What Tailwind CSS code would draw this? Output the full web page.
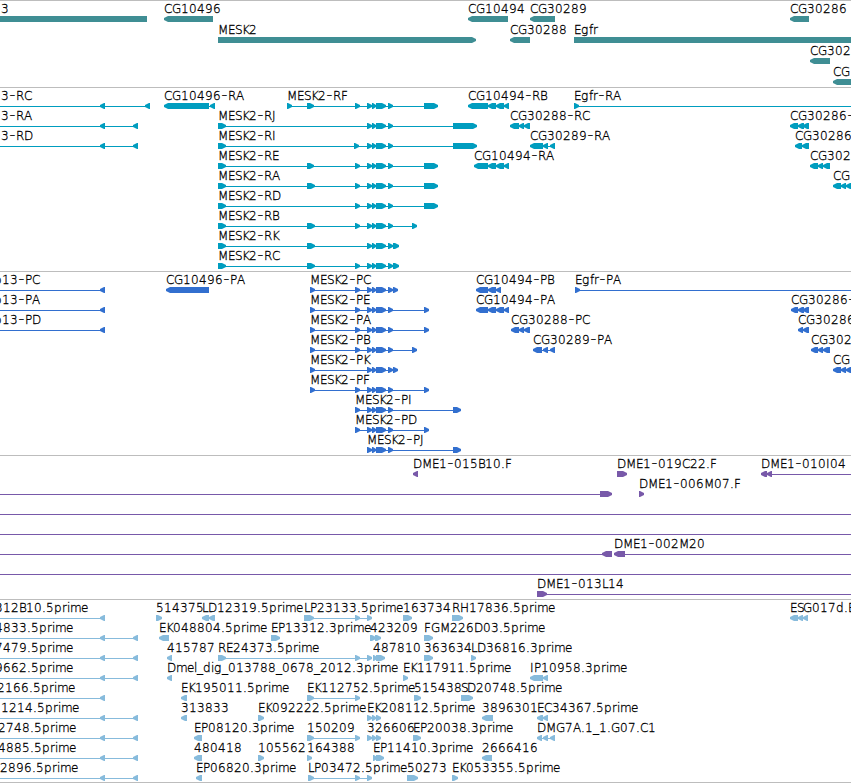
<!DOCTYPE html>
<html lang="en">
<head>
<meta charset="utf-8">
<title>Genome tracks</title>
<script src="https://cdn.jsdelivr.net/npm/@tailwindcss/browser@4"></script>
</head>
<body class="bg-white overflow-hidden">
<main class="flex flex-col w-[851px] h-[783px] border-b border-[#bdbdbd] font-['DejaVu_Sans',sans-serif] font-extralight text-[12px] text-black">
  <section class="h-[87px] border-t border-[#bdbdbd] text-[#3f8e94]"><svg id="genes" class="block w-full h-full overflow-hidden"></svg></section>
  <section class="h-[184px] border-t border-[#bdbdbd] text-[#009dbf]"><svg id="transcripts" class="block w-full h-full overflow-hidden"></svg></section>
  <section class="h-[184px] border-t border-[#bdbdbd] text-[#326fcf]"><svg id="proteins" class="block w-full h-full overflow-hidden"></svg></section>
  <section class="h-[144px] border-t border-[#bdbdbd] text-[#7859a9]"><svg id="clones" class="block w-full h-full overflow-hidden"></svg></section>
  <section class="h-[183px] border-t border-[#bdbdbd] text-[#87bbdc]"><svg id="ests" class="block w-full h-full overflow-hidden"></svg></section>
</main>
<script>
const NS = 'http://www.w3.org/2000/svg';
// Horizontal advance of each label character, in pixels
const ADV = {C:8,G:9,M:10,E:7,S:6,K:7,'-':7,R:8,A:8,B:7,D:9,F:7,J:4,I:4,P:7,L:6,H:9,'.':4,p:8,r:5,i:3,m:11,e:7,_:6,l:3,g:8,f:4,d:8};

function add(svg, tag, attrs) {
  const el = document.createElementNS(NS, tag);
  for (const k in attrs) el.setAttribute(k, attrs[k]);
  svg.appendChild(el);
  return el;
}

// Each feature: [row, strand, label, labelX, exons, lineStart, lineEnd]
function draw(id, pitch, features) {
  const svg = document.getElementById(id);
  for (const [row, strand, label, lx, exons, a, b] of features) {
    const top = row * pitch;
    const s = a ?? (exons.length ? exons[0][0] : 0);
    const e = b ?? (exons.length ? exons[exons.length - 1][1] : 851);
    add(svg, 'rect', {x: s, y: top + 18, width: e - s, height: 1, fill: 'currentColor', 'shape-rendering': 'crispEdges'});
    for (const [x1, x2] of exons) {
      const h = Math.min(5, x2 - x1), t = top + 15, c = top + 18, d = top + 21;
      const pts = strand === 'R'
        ? `${x1},${t} ${x2-h+1},${t} ${x2},${c-1} ${x2},${c+1} ${x2-h+1},${d} ${x1},${d}`
        : `${x2},${t} ${x1+h-1},${t} ${x1},${c-1} ${x1},${c+1} ${x1+h-1},${d} ${x2},${d}`;
      add(svg, 'polygon', {points: pts, fill: 'currentColor'});
    }
    if (label) {
      let x = lx;
      const xs = [];
      [...label].forEach((ch, i) => {
        xs.push(ch === '-' ? x + 0.5 : x);
        x += ch === 'S' && label[i + 1] === 'K' ? 7 : ADV[ch] ?? 8;
      });
      const t = add(svg, 'text', {x: xs.join(' '), y: top + 12, fill: '#000', stroke: '#000', 'stroke-width': 0.3});
      label.split(/(-)/).forEach(part => {
        const sp = document.createElementNS(NS, 'tspan');
        if (part === '-') sp.setAttribute('font-size', '16');
        sp.textContent = part;
        t.appendChild(sp);
      });
    }
  }
}

const core = [[367,372],[372,376],[376,386],[388,393]];
const e355 = [355,360];

draw('genes', 21, [
  [0,'L','3',1,[[-10,147]]],
  [0,'L','CG10496',164,[[164,213]]],
  [0,'L','CG10494',468,[[468,508]]],
  [0,'L','CG30289',530,[[530,555]]],
  [0,'L','CG30286',790,[[790,809]]],
  [1,'R','MESK2',218,[[218,476]]],
  [1,'L','CG30288',510,[[510,530]]],
  [1,'R','Egfr',574,[[574,900]]],
  [2,'L','CG302',810,[[810,830]]],
  [3,'L','CG',833,[[833,900]]],
]);

draw('transcripts', 20, [
  [0,'L','3-RC',1,[[100,105],[145,150]],0],
  [1,'L','3-RA',1,[[100,105],[133,138]],0],
  [2,'L','3-RD',1,[[100,105],[133,138]],0],
  [0,'L','CG10496-RA',164,[[164,209],[210,215]]],
  [0,'R','MESK2-RF',287,[[287,292],[307,314],e355,...core,[424,438]]],
  [1,'R','MESK2-RJ',218,[[218,226],...core,[453,477]]],
  [2,'R','MESK2-RI',218,[[218,226],[354,359],...core,[453,477]]],
  [3,'R','MESK2-RE',218,[[218,226],[307,314],e355,...core,[424,438]]],
  [4,'R','MESK2-RA',218,[[218,226],[307,315],e355,...core,[424,438]]],
  [5,'R','MESK2-RD',218,[[218,226],e355,...core,[424,438]]],
  [6,'R','MESK2-RB',218,[[218,226],[307,315],e355,...core,[412,417]]],
  [7,'R','MESK2-RK',218,[[218,226],[307,315],...core,[393,399]]],
  [8,'R','MESK2-RC',218,[[218,226],[307,315],e355,...core,[393,399]]],
  [0,'L','CG10494-RB',468,[[468,488],[488,496],[496,504],[504,509]]],
  [1,'L','CG30288-RC',510,[[510,519],[519,524],[524,530]]],
  [2,'L','CG30289-RA',530,[[530,543],[543,548],[550,555]]],
  [3,'L','CG10494-RA',474,[[474,488],[488,496],[496,504],[504,509]]],
  [0,'R','Egfr-RA',574,[[574,579]],574,851],
  [1,'L','CG30286-',790,[[790,798],[798,804],[803,809]]],
  [2,'L','CG30286',795,[[795,802],[802,809]]],
  [3,'L','CG302',810,[[810,818],[818,823],[823,830]]],
  [4,'L','CG',833,[[833,841],[841,846],[846,852]]],
]);

draw('proteins', 20, [
  [0,'L','p13-PC',-6,[[100,105]],0],
  [1,'L','p13-PA',-6,[[100,105]],0],
  [2,'L','p13-PD',-6,[[100,105]],0],
  [0,'L','CG10496-PA',166,[[166,209]]],
  [0,'R','MESK2-PC',310,[[310,315],e355,...core,[393,398]]],
  [1,'R','MESK2-PE',310,[[310,315],e355,...core,[424,429]]],
  [2,'R','MESK2-PA',310,[[310,315],e355,...core,[424,429]]],
  [3,'R','MESK2-PB',310,[[310,315],e355,...core,[412,417]]],
  [4,'R','MESK2-PK',310,[[310,315],...core,[393,398]]],
  [5,'R','MESK2-PF',310,[[310,315],e355,...core,[424,429]]],
  [6,'R','MESK2-PI',355,[e355,...core,[453,461]]],
  [7,'R','MESK2-PD',355,[e355,...core,[424,429]]],
  [8,'R','MESK2-PJ',367,[...core,[453,461]]],
  [0,'L','CG10494-PB',476,[[476,488],[488,496],[496,501]]],
  [1,'L','CG10494-PA',476,[[476,488],[488,496],[496,504],[504,509]]],
  [2,'L','CG30288-PC',511,[[511,519],[519,524],[524,530]]],
  [3,'L','CG30289-PA',533,[[533,542],[543,548],[550,555]]],
  [0,'R','Egfr-PA',575,[[575,580]],575,851],
  [1,'L','CG30286-',791,[[791,798],[798,804],[803,809]]],
  [2,'L','CG30286',798,[[798,803],[803,809]]],
  [3,'L','CG302',811,[[811,818],[818,823],[823,830]]],
  [4,'L','CG',833,[[833,841],[841,846],[846,852]]],
]);

draw('clones', 20, [
  [0,'L','DME1-015B10.F',413,[[413,418]]],
  [0,'R','DME1-019C22.F',617,[[617,627]]],
  [0,'L','DME1-010I04',761,[[761,767],[767,772]],761,851],
  [1,'R','',0,[[600,612]],0],
  [1,'R','DME1-006M07.F',639,[[639,644]]],
  [2,'R','',0,[]],
  [3,'R','',0,[]],
  [4,'L','',0,[[602,612]],0],
  [4,'L','DME1-002M20',614,[[614,625]],614,851],
  [5,'R','',0,[]],
  [6,'R','DME1-013L14',537,[[537,547]],537,851],
]);

const a = [100,105], b = [133,138];
draw('ests', 20, [
  [0,'L','312B10.5prime',-5,[a],0],
  [1,'L','4833.5prime',-5,[a,b],0],
  [2,'L','7479.5prime',-5,[a,b],0],
  [3,'L','9662.5prime',-5,[a,b],0],
  [4,'L','2166.5prime',-3,[a],0],
  [5,'L','1214.5prime',1,[a,b],0],
  [6,'L','2748.5prime',-2,[a,b],0],
  [7,'L','4885.5prime',-2,[a,b],0],
  [8,'L','2896.5prime',0,[a,b],0],
  [0,'R','514375',156,[[156,162]]],
  [0,'L','LD12319.5prime',202,[[202,209],[209,215]]],
  [0,'R','LP23133.5prime',304,[[304,314],e355,[367,372]], 307],
  [0,'R','163734',403,[[403,412]]],
  [0,'R','RH17836.5prime',452,[[452,463]]],
  [0,'L','ESG017d.E',790,[[790,798],[798,803],[803,808]]],
  [1,'L','EK048804.5prime',159,[[159,169]]],
  [1,'R','EP13312.3prime',271,[[271,280]]],
  [1,'R','423209',370,[[370,376],[375,381]]],
  [1,'R','FGM226D03.5prime',424,[[424,433]]],
  [2,'L','415787',167,[[167,172]]],
  [2,'R','RE24373.5prime',218,[[218,226],e355,[367,372]]],
  [2,'R','487810',373,[[373,377],[376,385]]],
  [2,'R','363634',424,[[424,433]]],
  [2,'R','LD36816.3prime',471,[[471,476]]],
  [3,'L','Dmel_dig_013788_0678_2012.3prime',167,[[167,172]]],
  [3,'R','EK117911.5prime',403,[[403,408]]],
  [3,'L','IP10958.3prime',530,[[530,543],[543,548]]],
  [4,'L','EK195011.5prime',181,[[181,187]]],
  [4,'R','EK112752.5prime',307,[[307,314],e355]],
  [4,'R','515438',414,[[414,421]]],
  [4,'R','SD20748.5prime',461,[[461,473]]],
  [5,'L','313833',181,[[181,187]]],
  [5,'R','EK092222.5prime',258,[[258,264]]],
  [5,'R','EK208112.5prime',367,[[367,372],[372,376],[376,381]]],
  [5,'L','3896301',482,[[482,493]]],
  [5,'L','EC34367.5prime',537,[[537,543],[543,548]]],
  [6,'L','EP08120.3prime',194,[[194,202]]],
  [6,'R','150209',307,[[307,314],e355]],
  [6,'R','326606',367,[[367,372],[372,376],[376,381]]],
  [6,'R','EP20038.3prime',413,[[413,421]]],
  [6,'L','DMG7A.1_1.G07.C1',537,[[537,542],[543,548],[550,555]]],
  [7,'L','480418',194,[[194,202]]],
  [7,'R','105562',258,[[258,264]]],
  [7,'R','164388',307,[[307,312]]],
  [7,'R','EP11410.3prime',373,[[373,377],[376,384]]],
  [7,'L','2666416',482,[[482,492]]],
  [8,'L','EP06820.3prime',196,[[196,202]]],
  [8,'R','LP03472.5prime',308,[[308,314],e355,[367,372]]],
  [8,'R','50273',407,[[407,418]]],
  [8,'R','EK053355.5prime',452,[[452,458]]],
]);
</script>
</body>
</html>
